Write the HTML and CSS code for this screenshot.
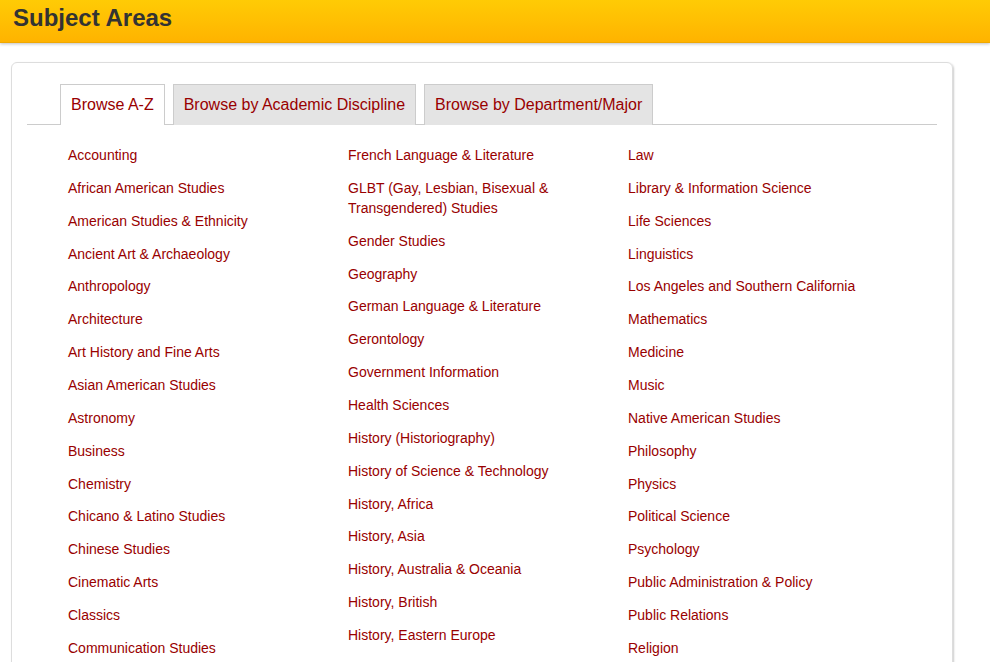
FILE: index.html
```html
<!DOCTYPE html>
<html>
<head>
<meta charset="utf-8">
<link rel="stylesheet" href="styles.css">
</head>
<body>
<header class="topbar"><h1 class="title">Subject Areas</h1></header>
<main class="card">
  <ul class="tabs">
    <li class="tab active">Browse A-Z</li>
    <li class="tab">Browse by Academic Discipline</li>
    <li class="tab">Browse by Department/Major</li>
  </ul>
  <div class="cols">
    <ul class="col">
      <li><a href="#">Accounting</a></li>
      <li><a href="#">African American Studies</a></li>
      <li><a href="#">American Studies &amp; Ethnicity</a></li>
      <li><a href="#">Ancient Art &amp; Archaeology</a></li>
      <li><a href="#">Anthropology</a></li>
      <li><a href="#">Architecture</a></li>
      <li><a href="#">Art History and Fine Arts</a></li>
      <li><a href="#">Asian American Studies</a></li>
      <li><a href="#">Astronomy</a></li>
      <li><a href="#">Business</a></li>
      <li><a href="#">Chemistry</a></li>
      <li><a href="#">Chicano &amp; Latino Studies</a></li>
      <li><a href="#">Chinese Studies</a></li>
      <li><a href="#">Cinematic Arts</a></li>
      <li><a href="#">Classics</a></li>
      <li><a href="#">Communication Studies</a></li>
    </ul>
    <ul class="col">
      <li><a href="#">French Language &amp; Literature</a></li>
      <li><a href="#">GLBT (Gay, Lesbian, Bisexual &amp; Transgendered) Studies</a></li>
      <li><a href="#">Gender Studies</a></li>
      <li><a href="#">Geography</a></li>
      <li><a href="#">German Language &amp; Literature</a></li>
      <li><a href="#">Gerontology</a></li>
      <li><a href="#">Government Information</a></li>
      <li><a href="#">Health Sciences</a></li>
      <li><a href="#">History (Historiography)</a></li>
      <li><a href="#">History of Science &amp; Technology</a></li>
      <li><a href="#">History, Africa</a></li>
      <li><a href="#">History, Asia</a></li>
      <li><a href="#">History, Australia &amp; Oceania</a></li>
      <li><a href="#">History, British</a></li>
      <li><a href="#">History, Eastern Europe</a></li>
    </ul>
    <ul class="col">
      <li><a href="#">Law</a></li>
      <li><a href="#">Library &amp; Information Science</a></li>
      <li><a href="#">Life Sciences</a></li>
      <li><a href="#">Linguistics</a></li>
      <li><a href="#">Los Angeles and Southern California</a></li>
      <li><a href="#">Mathematics</a></li>
      <li><a href="#">Medicine</a></li>
      <li><a href="#">Music</a></li>
      <li><a href="#">Native American Studies</a></li>
      <li><a href="#">Philosophy</a></li>
      <li><a href="#">Physics</a></li>
      <li><a href="#">Political Science</a></li>
      <li><a href="#">Psychology</a></li>
      <li><a href="#">Public Administration &amp; Policy</a></li>
      <li><a href="#">Public Relations</a></li>
      <li><a href="#">Religion</a></li>
    </ul>
  </div>
</main>
</body>
</html>
```
FILE: styles.css
```css
html, body {
  margin: 0;
  padding: 0;
  background: #fff;
  font-family: "Liberation Sans", Arial, sans-serif;
  overflow: hidden;
}
.topbar {
  height: 43px;
  background: linear-gradient(#ffcb05, #ffb300);
  box-shadow: 0 1px 3px rgba(0,0,0,0.25);
  border-bottom: 1px solid #f0a800;
  box-sizing: border-box;
}
.title {
  margin: 0;
  padding: 4px 0 0 13px;
  font-size: 24px;
  line-height: 28px;
  font-weight: bold;
  color: #333;
}
.card {
  margin: 19px 0 0 11px;
  width: 942px;
  height: 640px;
  box-sizing: border-box;
  border: 1px solid #ddd;
  border-radius: 6px;
  box-shadow: 1px 1px 2px rgba(0,0,0,0.2);
  padding: 21px 15px 0 15px;
}
.tabs {
  list-style: none;
  margin: 0;
  padding: 0 0 0 33px;
  display: flex;
  gap: 8px;
  border-bottom: 1px solid #ccc;
  height: 41px;
  box-sizing: border-box;
}
.tab {
  font-size: 16px;
  line-height: 40px;
  height: 41px;
  box-sizing: border-box;
  padding: 0 10px;
  color: #990000;
  background: #e4e4e4;
  border: 1px solid #ccc;
  border-bottom: none;
}
.tab.active {
  background: #fff;
  border-color: #ccc;
}
.cols {
  display: grid;
  grid-template-columns: 260px 260px 260px;
  column-gap: 20px;
  padding: 20px 0 0 41px;
}
.col {
  list-style: none;
  margin: 0;
  padding: 0;
  display: flex;
  flex-direction: column;
  gap: 12.87px;
}
.col li {
  font-size: 14px;
  line-height: 20px;
}
.col a {
  color: #990000;
  text-decoration: none;
}
```
